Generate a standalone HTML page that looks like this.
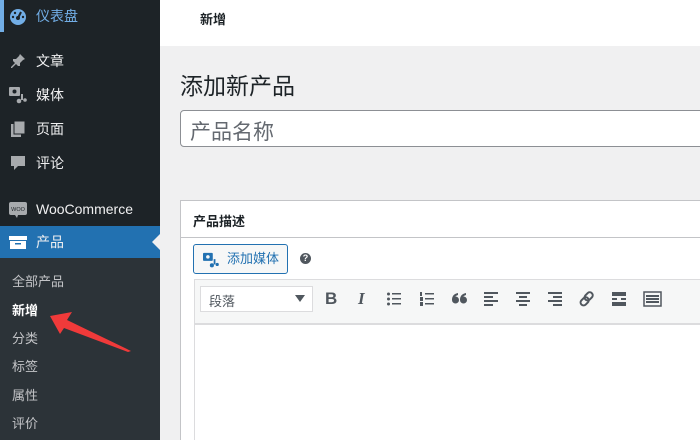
<!DOCTYPE html>
<html><head><meta charset="utf-8"><style>
*{margin:0;padding:0;box-sizing:border-box}
html,body{width:700px;height:440px;overflow:hidden}
body{background:#f0f0f1;font-family:"Liberation Sans","Noto Sans CJK SC",sans-serif;position:relative}
#sb{position:absolute;left:0;top:0;width:160px;height:440px;background:#1d2327}
.it{position:absolute;left:0;width:160px;height:34px;color:#f0f0f1;font-size:14px;line-height:34px;padding-left:36px}
.ic{position:absolute;left:9px;top:8px;width:18px;height:18px}
#sub{position:absolute;left:0;top:258px;width:160px;height:182px;background:#2c3338}
.s{position:absolute;left:12px;font-size:13px;color:#c3c4c7}
#top{position:absolute;left:160px;top:0;width:540px;height:46px;background:#fff}
</style></head><body>
<div id="sb">
<div style="position:absolute;left:0;top:0;width:4px;height:32px;background:#72aee6"></div>
<div class="it" style="top:-1px;color:#72aee6"><svg class="ic" viewBox="0 0 18 18"><circle cx="9" cy="10" r="8" fill="#72aee6"/><circle cx="9" cy="11" r="2" fill="#1d2327"/><path d="M9 11 L12 5" stroke="#1d2327" stroke-width="2"/><circle cx="4" cy="10" r="1.2" fill="#1d2327"/><circle cx="14" cy="10" r="1.2" fill="#1d2327"/><circle cx="6" cy="6" r="1.2" fill="#1d2327"/></svg>仪表盘</div>
<div class="it" style="top:44px"><svg class="ic" viewBox="0 0 18 18"><path d="M11 2l5 5-2 1-3 3 0 3-2 0-2-2-4 4-1 0 0-1 4-4-2-2 0-2 3 0 3-3z" fill="#a7aaad"/></svg>文章</div>
<div class="it" style="top:78px"><svg class="ic" viewBox="0 0 18 18"><rect x="0" y="1" width="11" height="9" rx="1" fill="#a7aaad"/><circle cx="5.5" cy="5.5" r="2" fill="#1d2327"/><path d="M13 8v6" stroke="#a7aaad" stroke-width="2"/><circle cx="10" cy="15" r="2.3" fill="#a7aaad"/><circle cx="16" cy="14" r="1.8" fill="#a7aaad"/></svg>媒体</div>
<div class="it" style="top:112px"><svg class="ic" viewBox="0 0 18 18"><rect x="2" y="4" width="10" height="13" fill="#a7aaad"/><rect x="5" y="1" width="11" height="13" fill="#a7aaad" stroke="#1d2327"/></svg>页面</div>
<div class="it" style="top:146px"><svg class="ic" viewBox="0 0 18 18"><path d="M2 2h14v10h-7l-4 4v-4h-3z" fill="#a7aaad"/></svg>评论</div>
<div class="it" style="top:192px"><svg class="ic" viewBox="0 0 18 18" style="left:8px;width:20px"><rect x="0" y="2" width="18" height="13" rx="2" fill="#a7aaad"/><path d="M6 15l2 3 1-3z" fill="#a7aaad"/><text x="9" y="11" font-size="5.5" text-anchor="middle" fill="#1d2327" font-family="Liberation Sans">WOO</text></svg>WooCommerce</div>
<div style="position:absolute;left:0;top:226px;width:160px;height:32px;background:#2271b1"></div>
<div class="it" style="top:225px"><svg class="ic" viewBox="0 0 18 18"><rect x="0" y="3" width="18" height="4" fill="#fff"/><rect x="1" y="8" width="16" height="8" fill="#fff"/><rect x="6" y="10" width="6" height="1.5" fill="#2271b1"/></svg>产品</div>
<div style="position:absolute;left:152px;top:234px;width:0;height:0;border-top:8px solid transparent;border-bottom:8px solid transparent;border-right:8px solid #f0f0f1"></div>
<div id="sub">
<div class="s" style="top:13px">全部产品</div>
<div class="s" style="top:42px;color:#fff;font-weight:bold">新增</div>
<div class="s" style="top:70px">分类</div>
<div class="s" style="top:98px">标签</div>
<div class="s" style="top:127px">属性</div>
<div class="s" style="top:155px">评价</div>
</div>
</div>
<svg style="position:absolute;left:0;top:0" width="160" height="440"><path d="M50 316 L72 312 L67 320 L131 351 L128 352 L64 328 L60 334 Z" fill="#f03a3a"/></svg>
<div id="top"><div style="position:absolute;left:40px;top:9px;font-size:13px;font-weight:bold;color:#1d2327">新增</div></div>
<div style="position:absolute;left:180px;top:67px;font-size:23px;color:#1d2327">添加新产品</div>
<div style="position:absolute;left:180px;top:110px;width:540px;height:37px;background:#fff;border:1px solid #8c8f94;border-radius:4px;font-size:21px;color:#646970;padding:5px 9px">产品名称</div>
<div style="position:absolute;left:180px;top:200px;width:540px;height:250px;background:#fff;border:1px solid #c3c4c7">
<div style="height:37px;border-bottom:1px solid #c3c4c7;font-size:13px;font-weight:bold;color:#1d2327;padding:10px 12px">产品描述</div>
<div style="position:absolute;left:12px;top:43px;width:95px;height:30px;border:1px solid #2271b1;border-radius:3px;background:#f6f7f7;color:#2271b1;font-size:13px;line-height:28px;padding-left:33px">添加媒体
<svg style="position:absolute;left:9px;top:7px" width="16" height="16" viewBox="0 0 18 18"><rect x="0" y="1" width="11" height="9" rx="1" fill="#2271b1"/><circle cx="5.5" cy="5.5" r="2" fill="#f6f7f7"/><path d="M13 8v6" stroke="#2271b1" stroke-width="2"/><circle cx="10" cy="15" r="2.3" fill="#2271b1"/><circle cx="16" cy="14" r="1.8" fill="#2271b1"/></svg></div>
<div style="position:absolute;left:119px;top:52px;width:11px;height:11px;border-radius:50%;background:#50575e;color:#fff;font-size:9px;font-weight:bold;text-align:center;line-height:11px">?</div>
<div style="position:absolute;left:13px;top:78px;width:530px;height:46px;background:#f6f7f7;border:1px solid #dcdcde;border-bottom:2px solid #dcdcde"></div>
<div style="position:absolute;left:19px;top:85px;width:113px;height:26px;background:#fff;border:1px solid #dcdcde;font-size:13px;color:#50575e;padding:4px 8px">段落<span style="position:absolute;right:7px;top:8px;border-left:5px solid transparent;border-right:5px solid transparent;border-top:7px solid #50575e"></span></div>
<div style="position:absolute;left:13px;top:78px;width:1px;height:182px;background:#dcdcde"></div>
<div style="position:absolute;left:142px;top:88px;font-size:17px;color:#50575e;white-space:nowrap">
<span style="position:absolute;left:2px;font-weight:bold">B</span>
<span style="position:absolute;left:35px;font-style:italic;font-family:'Liberation Serif';font-weight:bold">I</span>
<svg style="position:absolute;left:64px;top:3px" width="14" height="14"><g fill="#50575e"><circle cx="1.5" cy="2" r="1.5"/><circle cx="1.5" cy="7" r="1.5"/><circle cx="1.5" cy="12" r="1.5"/><rect x="5" y="1" width="9" height="1.5"/><rect x="5" y="6" width="9" height="1.5"/><rect x="5" y="11" width="9" height="1.5"/></g></svg>
<svg style="position:absolute;left:97px;top:3px" width="14" height="14"><g fill="#50575e"><rect x="0" y="0" width="2" height="4"/><rect x="0" y="5" width="3" height="4"/><rect x="0" y="10" width="3" height="4"/><rect x="5" y="1" width="9" height="1.5"/><rect x="5" y="6" width="9" height="1.5"/><rect x="5" y="11" width="9" height="1.5"/></g></svg>
<svg style="position:absolute;left:129px;top:4px" width="16" height="12"><g fill="#50575e"><circle cx="3.5" cy="7" r="3.5"/><path d="M0 7 Q0 1 6 0 L6 2 Q2 3 2 7z"/><circle cx="11.5" cy="7" r="3.5"/><path d="M8 7 Q8 1 14 0 L14 2 Q10 3 10 7z"/></g></svg>
<svg style="position:absolute;left:161px;top:3px" width="14" height="14"><g fill="#50575e"><rect y="0" width="14" height="2"/><rect y="4" width="9" height="2"/><rect y="8" width="14" height="2"/><rect y="12" width="9" height="2"/></g></svg>
<svg style="position:absolute;left:193px;top:3px" width="14" height="14"><g fill="#50575e"><rect y="0" width="14" height="2"/><rect x="3" y="4" width="8" height="2"/><rect y="8" width="14" height="2"/><rect x="3" y="12" width="8" height="2"/></g></svg>
<svg style="position:absolute;left:225px;top:3px" width="14" height="14"><g fill="#50575e"><rect y="0" width="14" height="2"/><rect x="5" y="4" width="9" height="2"/><rect y="8" width="14" height="2"/><rect x="5" y="12" width="9" height="2"/></g></svg>
<svg style="position:absolute;left:256px;top:2px" width="16" height="16"><g fill="none" stroke="#50575e" stroke-width="2"><rect x="7" y="1" width="6" height="9" rx="3" transform="rotate(45 10 5)"/><rect x="3" y="6" width="6" height="9" rx="3" transform="rotate(45 6 10)"/></g></svg>
<svg style="position:absolute;left:289px;top:3px" width="14" height="14"><g fill="#50575e"><rect y="0" width="14" height="4"/><rect y="6" width="5" height="2"/><rect x="9" y="6" width="5" height="2"/><rect y="10" width="14" height="4"/></g></svg>
<svg style="position:absolute;left:320px;top:2px" width="19" height="16"><g fill="none" stroke="#50575e" stroke-width="1.5"><rect x="1" y="1" width="17" height="14"/></g><g fill="#50575e"><rect x="3" y="4" width="13" height="2"/><rect x="3" y="7" width="13" height="2"/><rect x="3" y="10" width="13" height="2"/></g></svg>
</div>
</div>
</body></html>
